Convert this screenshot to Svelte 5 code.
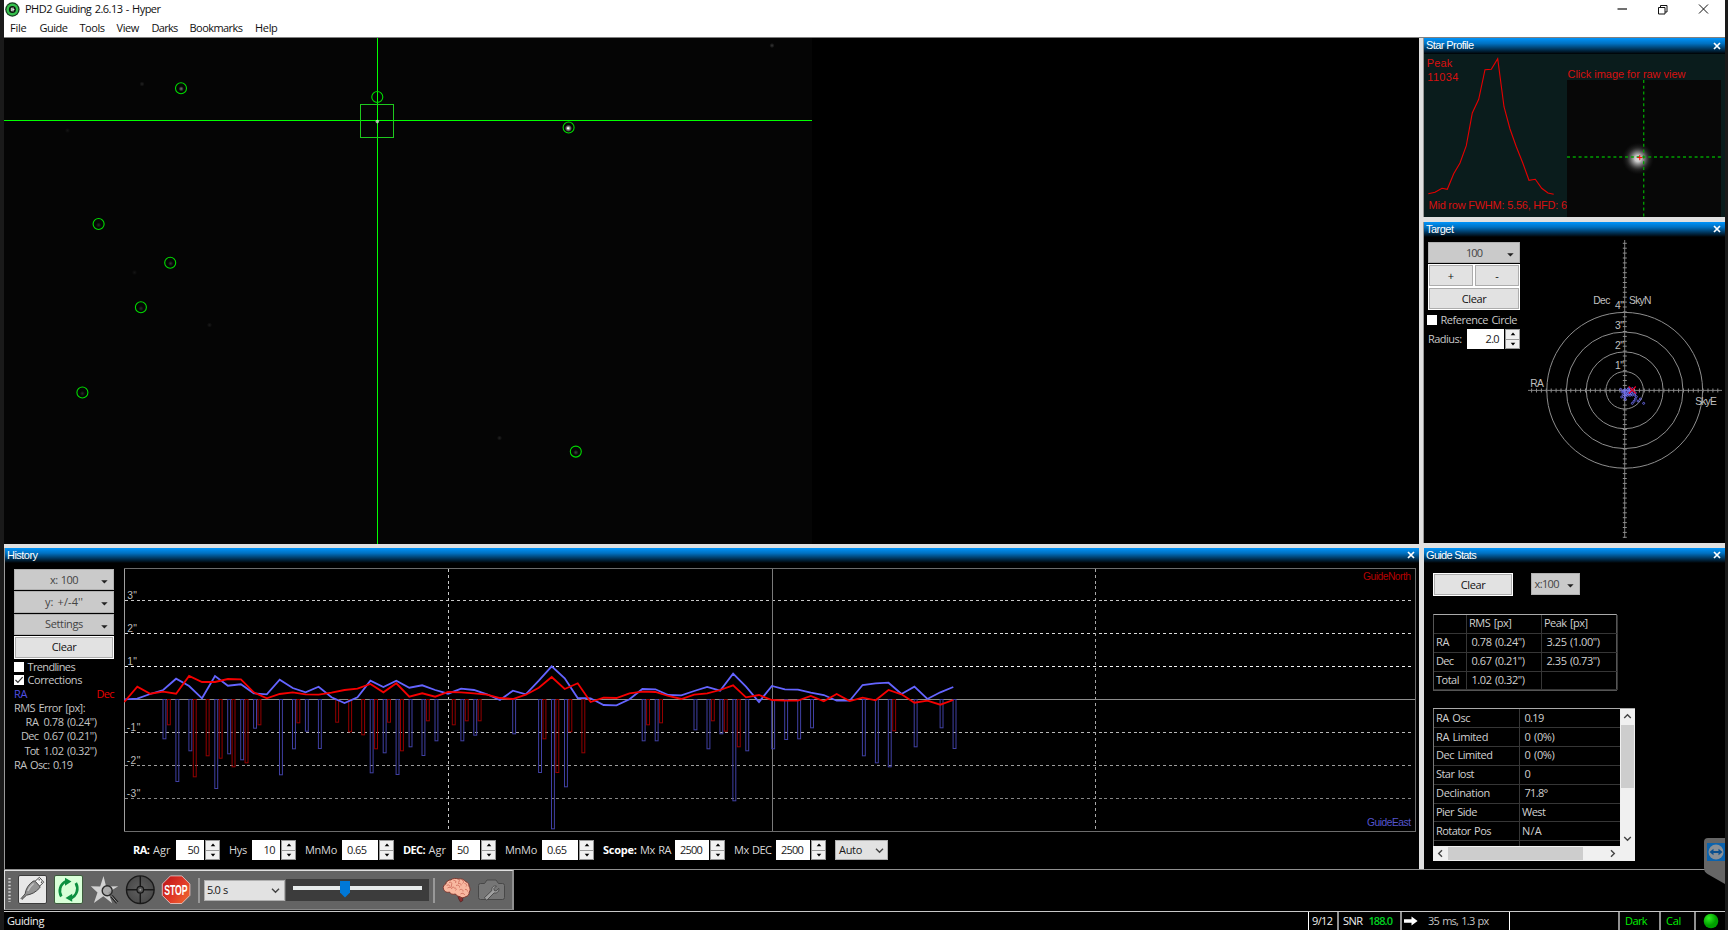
<script>
  // Sets the tracking of a label so that it takes exactly the given width.
  function fit(node, w) {
    if (!w) return;
    const n = node.textContent.length;
    const natural = node.getBoundingClientRect().width;
    node.style.letterSpacing = (w - natural) / n + 'px';
  }

  const menu = [['File', 16.5, 13], ['Guide', 28, 12], ['Tools', 25, 12], ['View', 22.5, 12.5], ['Darks', 26, 12], ['Bookmarks', 53, 12.5], ['Help', 22.5, 0]];

  const stars = [[181, 88.2], [377.3, 97], [568.6, 127.5], [98.6, 224], [170.2, 262.7], [140.9, 307.3], [82.4, 392.5], [575.8, 451.6]];
  const specks = [[142, 84, 0.12], [67.5, 130.5, 0.06], [772, 45.5, 0.2], [134.5, 272.5, 0.06], [209.5, 325, 0.09], [499.5, 438, 0.12], [181.2, 88.8, 0.45], [98.6, 225, 0.15], [170.6, 263.5, 0.2], [141, 308.5, 0.15], [82.4, 393.5, 0.15], [575.8, 452.5, 0.25]];

  const X0 = 124.3, STEP = 12.953;
  const px = (k) => X0 + k * STEP;
  const ra = [478,476,462,450,416,438,475,408,437,433,460,463,419,444,457,440,472,489,472,422,441,422,443,436,450,461,446,450,463,480,452,463,422,379,415,474,475,495,496,478,447,448,465,466,453,441,452,401,440,486,438,448,449,458,465,482,482,435,430,428,462,440,477,457,441];
  const dec = [486,440,461,455,461,408,426,426,417,418,457,475,462,457,463,464,458,450,446,432,457,430,470,460,470,456,457,460,464,474,477,464,443,411,447,430,486,473,474,460,455,456,468,477,464,460,450,436,472,465,480,482,482,468,484,462,483,473,481,450,463,488,482,494,480];
  const line = (a) => a.map((v, k) => `${px(k).toFixed(1)},${(540 + v / 3).toFixed(1)}`).join(' ');
  const raBars = [[3,598],[4,726],[5,634],[7,747],[8,643],[9,661],[10,566],[12,706],[13,628],[14,575],[15,627],[19,700],[20,640],[21,705],[22,622],[23,648],[24,604],[26,604],[27,587],[30,583],[32,699],[33,868],[34,742],[40,604],[41,604],[44,571],[45,628],[46,583],[47,784],[48,634],[50,628],[51,600],[52,598],[53,565],[57,649],[58,670],[59,682],[61,622],[63,565],[64,627]];
  const decBars = [[3,556],[5,712],[6,649],[7,656],[8,682],[9,670],[10,556],[13,550],[16,548],[17,577],[18,586],[19,628],[20,548],[21,634],[23,544],[25,556],[26,544],[27,544],[32,598],[33,699],[34,577],[35,640],[40,556],[41,550],[45,544],[46,575],[47,622],[59,574]];
  const grid = [[3,600.5,'#c8c8c8'],[2,633.5,'#dcdcdc'],[1,666.5,'#f4f4f4'],[-1,732.5,'#b8b8b8'],[-2,765.5,'#9c9c9c'],[-3,798.5,'#868686']];

  const params = [
    { w: 87, bold: 'RA:', bw: 16.5, label: 'Agr', lw: 17.5, value: '50', iw: 28, right: true },
    { w: 67, label: 'Hys', lw: 18, value: '10', iw: 28, right: true },
    { w: 89, label: 'MnMo', lw: 32, value: '0.65', iw: 36 },
    { w: 93, bold: 'DEC:', bw: 22, label: 'Agr', lw: 17.5, value: '50', iw: 28 },
    { w: 89, label: 'MnMo', lw: 32, value: '0.65', iw: 36 },
    { w: 122, bold: 'Scope:', bw: 33.5, label: 'Mx RA', lw: 31, value: '2500', iw: 34 },
    { w: 92, label: 'Mx DEC', lw: 37.5, value: '2500', iw: 34 }
  ];

  const profile = '55,581 75,577 96,565 112,568 131,521 150,489 169,437 187,339 206,298 225,209 244,208 263,176 282,320 300,387 319,440 338,488 357,541 376,538 395,565 414,579 431,583'
    .split(' ').map((p) => { const [x, y] = p.split(',').map(Number); return `${(1410 + x / 3).toFixed(1)},${(y / 3).toFixed(1)}`; }).join(' ');

  const vticks = Array.from({ length: 61 }, (_, i) => 390.3 + (i - 30) * 4.9);
  const hticks = Array.from({ length: 39 }, (_, i) => 1624.7 + (i - 19.5 + 0.5) * 4.9);
  const dots = [[632,508],[636,516],[640,512],[645,509],[650,513],[654,508],[658,514],[662,509],[646,519],[652,521],[658,521],[664,520],[640,524],[646,528],[653,526],[660,526],[667,525],[644,533],[646,538],[635,531],[670,517],[676,519],[656,505],[667,506],[679,530],[676,537],[672,544],[667,550],[684,543],[691,537],[701,550],[674,525],[649,524],[655,517],[643,517],[661,517]];

  const stats = [['RA Osc', 34, '0.19', 19, 5], ['RA Limited', 52, '0 (0%)', 30, 5], ['Dec Limited', 56.5, '0 (0%)', 30, 5], ['Star lost', 38, '0', 6, 5], ['Declination', 54, '71.8°', 23, 5], ['Pier Side', 41, 'West', 23.5, 2.5], ['Rotator Pos', 55, 'N/A', 20, 2.5]];
</script>

{#snippet t(text, w, cls = '')}<span class="t {cls}" use:fit={w}>{text}</span>{/snippet}

{#snippet caption(text, w)}
  <div class="caption">
    {@render t(text, w)}
    <svg class="x" width="8" height="8" viewBox="0 0 8 8"><path d="M1 1 7 7M7 1 1 7" stroke="#fff" stroke-width="1.7" /></svg>
  </div>
{/snippet}

{#snippet spin()}
  <span class="spin">
    <i><svg width="6" height="4" viewBox="0 0 6 4"><path d="M3 .5 5.3 3.3H.7z" /></svg></i>
    <i><svg width="6" height="4" viewBox="0 0 6 4"><path d="M3 3.5.7.7h4.6z" /></svg></i>
  </span>
{/snippet}

{#snippet arrow()}<svg class="drop" width="7" height="4" viewBox="0 0 7 4"><path d="M.2.2h6.4L3.4 3.6z" fill="#222" /></svg>{/snippet}
{#snippet chev(d)}<svg width="9" height="9" viewBox="0 0 9 9" fill="none" stroke="#444" stroke-width="1.4"><path {d} /></svg>{/snippet}

<div class="desk">
  <div class="window">
    <header>
      <div class="title">
        <svg width="15" height="15" viewBox="0 0 15 15"><circle cx="7.4" cy="7.5" r="7.2" fill="#173d20" /><circle cx="7.4" cy="7.5" r="5.9" fill="#35c04c" /><circle cx="7.4" cy="7.5" r="3.5" fill="#0a160c" /><path d="M8.9 6.2H6.3v2.6h2.6M7.2 7.5h2.2" stroke="#fff" stroke-width=".9" fill="none" /></svg>
        {@render t('PHD2 Guiding 2.6.13 - Hyper', 135.5)}
        <div class="winbtns">
          <svg width="92" height="14" viewBox="0 0 92 14" fill="none" stroke="#111" stroke-width="1"><path d="M.5 7h9.5" stroke-width="1.2" /><path d="M41.500 5.500h6.500v6.500h-6.500zM43.500 5.500v-2h6.500v6.500h-2" /><path d="m82 2.500 9 9M91 2.500l-9 9" /></svg>
        </div>
      </div>
      <nav>{#each menu as [m, w, g]}<span style="margin-right:{g}px">{@render t(m, w)}</span>{/each}</nav>
    </header>

    <main>
      <section class="left">
        <svg class="camera" width="1415" height="506" viewBox="4 38 1415 506">
          <defs><radialGradient id="speck"><stop offset="0" stop-color="#fff" /><stop offset="1" stop-color="#fff" stop-opacity="0" /></radialGradient></defs>
          <rect x="4" y="38" width="808" height="506" fill="#050505" />
          {#each specks as [x, y, o]}<circle cx={x} cy={y} r="2.6" fill="url(#speck)" opacity={o} />{/each}
          <circle cx="568.4" cy="128.3" r="3.6" fill="url(#speck)" /><circle cx="568" cy="128.2" r=".9" fill="#fff" />
          <g fill="none" stroke="#00ff00" stroke-width="1">
            <path d="M4 120.5H812M377.5 38V544" shape-rendering="crispEdges" />
            <rect x="360.5" y="104.5" width="33" height="33" stroke="#1ec81e" />
            {#each stars as [x, y]}<circle cx={x} cy={y} r="5.5" stroke="#00dc00" stroke-width="1.1" />{/each}
          </g>
          <circle cx="377.3" cy="121.6" r="1.8" fill="#d8d8d8" opacity=".75" />
        </svg>
        <div class="hbar"></div>

        <div class="panel history">
          {@render caption('History', 30.5)}
          <div class="hist-body">
            <aside>
              <div class="btn grey">{@render t('x: 100', 28)}{@render arrow()}</div>
              <div class="btn grey">{@render t("y: +/-4''", 38)}{@render arrow()}</div>
              <div class="btn grey">{@render t('Settings', 38)}{@render arrow()}</div>
              <div class="btn lite">{@render t('Clear', 24.5)}</div>
              <div class="chk first"><b></b>{@render t('Trendlines', 47.5)}</div>
              <div class="chk"><b><svg width="10" height="10" viewBox="0 0 10 10"><path d="m1.5 5 2.4 2.4L8.6 2.2" fill="none" stroke="#333" stroke-width="1.2" /></svg></b>{@render t('Corrections', 54.5)}</div>
              <div class="axes"><span class="blue">{@render t('RA', 13)}</span><span class="red">{@render t('Dec', 17.5)}</span></div>
              <div class="rms">{@render t('RMS Error [px]:', 71)}</div>
              <div class="rms two"><span>{@render t('RA', 13)}</span>{@render t("0.78 (0.24'')", 53)}</div>
              <div class="rms two"><span>{@render t('Dec', 17.5)}</span>{@render t("0.67 (0.21'')", 53)}</div>
              <div class="rms two"><span>{@render t('Tot', 14)}</span>{@render t("1.02 (0.32'')", 53)}</div>
              <div class="rms">{@render t('RA Osc: 0.19', 58.5)}</div>
            </aside>
            <svg class="chart" width="1293" height="264" viewBox="124 568 1293 264">
              <g shape-rendering="crispEdges" fill="none">
                <rect x="124.5" y="568.5" width="1291" height="263" stroke="#6c6c6c" />
                <path d="M124.5 569v262" stroke="#a0a0a0" />
                {#each grid as [v, y, c]}<path d="M125 {y}H1413" stroke={c} stroke-dasharray="3 2.83" />{/each}
                <path d="M448.5 569V830" stroke="#c8c8c8" stroke-dasharray="3 2.83" /><path d="M1095.5 569V830" stroke="#a8a8a8" stroke-dasharray="3 2.83" />
                <path d="M772.5 569V831" stroke="#7a7a7a" /><path d="M125 699.5H1415" stroke="#8c8c8c" />
              </g>
              <g fill="none" stroke="#4040a4">{#each raBars as [k, b]}<rect x={(px(k) - 0.2).toFixed(1)} y="699.5" width="2.9" height={(540 + b / 3 - 700).toFixed(1)} />{/each}</g>
              <g fill="none" stroke="#940000">{#each decBars as [k, b]}<rect x={(px(k) + 4.2).toFixed(1)} y="699.5" width="2.9" height={(540 + b / 3 - 700).toFixed(1)} />{/each}</g>
              <polyline points={line(ra)} fill="none" stroke="#6464ff" stroke-width="1.8" />
              <polyline points={line(dec)} fill="none" stroke="#f50000" stroke-width="1.8" />
              {#each grid as [v, y]}<text class="arial small" x={v > 0 ? 127.3 : 126.8} y={y - 1.5} textLength={v > 0 ? 9.7 : 13.5} fill="#bcbcbc">{v}"</text>{/each}
              <text class="arial small" x="1363" y="580.3" textLength="48" fill="#b40000">GuideNorth</text>
              <text class="arial small" x="1367" y="826.3" textLength="44" fill="#5454cc">GuideEast</text>
            </svg>
          </div>
          <div class="params">
            {#each params as p}
              <div class="param" style="width:{p.w}px">
                <span class="lab">{#if p.bold}<strong>{@render t(p.bold, p.bw)}</strong>{/if}{@render t(p.label, p.lw)}</span>
                <span class="inp" class:right={p.right} style="width:{p.iw}px">{@render t(p.value, p.value.length === 2 ? 11.5 : p.value === '0.65' ? 19.5 : 22)}</span>
                {@render spin()}
              </div>
            {/each}
            <div class="auto">{@render t('Auto', 23)}{@render chev('M1 2.8 4.5 6.3 8 2.8')}</div>
          </div>
        </div>
      </section>

      <section class="rightcol">
        <div class="panel star">
          {@render caption('Star Profile', 47.5)}
          <svg width="301" height="163" viewBox="1424 54 301 163">
            <defs><radialGradient id="psf"><stop offset="0" stop-color="#e0e0e0" /><stop offset=".2" stop-color="#c8c8c8" /><stop offset=".45" stop-color="#808080" stop-opacity=".8" /><stop offset=".7" stop-color="#484848" stop-opacity=".4" /><stop offset="1" stop-color="#202020" stop-opacity="0" /></radialGradient></defs>
            <rect x="1424" y="54" width="301" height="163" fill="#0a1c1c" />
            <polyline points={profile} fill="none" stroke="#e60000" stroke-width="1.1" />
            <g class="arial" fill="#d81010">
              <text x="1426.7" y="67" textLength="25.5">Peak</text><text x="1427.3" y="80.7" textLength="31">11034</text>
              <text x="1567.5" y="77.8" textLength="118">Click image for raw view</text>
              <text x="1428.5" y="209.3" textLength="138.5">Mid row FWHM: 5.56, HFD: 6</text>
            </g>
            <rect x="1567" y="80" width="154" height="137" fill="#070707" />
            <circle cx="1638" cy="158.6" r="16" fill="url(#psf)" />
            <path d="M1567 157H1721M1643.7 80V217" stroke="#00a000" stroke-width="1.3" stroke-dasharray="3 2.8" />
            <path d="M1637.3 157.6h5M1639.8 155v5.2" stroke="#f00" />
          </svg>
        </div>
        <div class="hbar five"></div>
        <div class="panel target">
          {@render caption('Target', 27.5)}
          <div class="target-body">
            <div class="tctl">
              <div class="btn grey">{@render t('100', 16)}{@render arrow()}</div>
              <div class="pm"><div class="btn lite">+</div><div class="btn lite">-</div></div>
              <div class="btn lite">{@render t('Clear', 24.5)}</div>
              <div class="chk"><b></b>{@render t('Reference Circle', 76.5)}</div>
              <div class="radius">{@render t('Radius:', 33.5)}<span class="inp">{@render t('2.0', 13.5)}</span>{@render spin()}</div>
            </div>
            <svg width="199" height="306" viewBox="1526 237 199 306">
              <g fill="none" stroke="#8e8e8e">
                {#each [18.7, 38.4, 58.3, 77.9] as r}<circle cx="1624.7" cy="390.3" r={r} />{/each}
                <path d="M1624.7 240V538M1528 390.4H1722" stroke="#808080" />
                {#each vticks as y}<path d="M1622.8 {y}h4" />{/each}
                {#each hticks as x}<path d="M{x} 388.5v4" />{/each}
              </g>
              <g class="arial small" fill="#c0c0c0">
                <text x="1593.3" y="303.5" textLength="17">Dec</text><text x="1629" y="303.5" textLength="22.5">SkyN</text>
                <text x="1530.3" y="386.8" textLength="13.5">RA</text><text x="1695.3" y="404.8" textLength="21.5">SkyE</text>
                {#each [[4, 309.2], [3, 329], [2, 349], [1, 368.8]] as [n, y]}<text x="1615" y={y} textLength="9">{n}"</text>{/each}
              </g>
              <g fill="none" stroke="#7474ff" stroke-width=".8">{#each dots as [x, y]}<circle cx={1410 + x / 3} cy={220 + y / 3} r="1" />{/each}</g>
              <path d="m1628.8 386.500 7 7m0-7-7 7" stroke="#e8002a" stroke-width="1.1" />
            </svg>
          </div>
        </div>
        <div class="hbar five"></div>
        <div class="panel gstats">
          {@render caption('Guide Stats', 50)}
          <div class="gtop"><div class="btn lite">{@render t('Clear', 24.5)}</div><div class="btn grey">{@render t('x:100', 24.5)}{@render arrow()}</div></div>
          <div class="tbl rmst">
            <span></span><span>{@render t('RMS [px]', 42.5)}</span><span>{@render t('Peak [px]', 43.5)}</span>
            <span>{@render t('RA', 13)}</span><span class="in">{@render t("0.78 (0.24'')", 53)}</span><span class="in">{@render t("3.25 (1.00'')", 53)}</span>
            <span>{@render t('Dec', 17.5)}</span><span class="in">{@render t("0.67 (0.21'')", 53)}</span><span class="in">{@render t("2.35 (0.73'')", 53)}</span>
            <span>{@render t('Total', 23)}</span><span class="in">{@render t("1.02 (0.32'')", 53)}</span><span></span>
          </div>
          <div class="list">
            <div class="rows">
              {#each stats as [a, aw, b, bw, pad]}<div class="row"><span>{@render t(a, aw)}</span><span style="padding-left:{pad}px">{@render t(b, bw)}</span></div>{/each}
              <div class="row stub"><span></span><span></span></div>
            </div>
            <div class="vs">{@render chev('M1.2 6 4.5 2.7 7.8 6')}<i></i>{@render chev('M1.2 3 4.5 6.3 7.8 3')}</div>
            <div class="hs">{@render chev('M6 1.2 2.7 4.5 6 7.8')}<i></i>{@render chev('M3 1.2 6.3 4.5 3 7.8')}</div>
            <div class="corner"></div>
          </div>
          <svg class="badge" width="21" height="46" viewBox="0 0 21 46"><path d="M21 0H4Q0 0 0 4v25.500Q0 34 3.500 36L21 46z" fill="#666" /><rect x="3" y="5" width="18" height="18" fill="#0b63ae" /><circle cx="12" cy="14" r="7.500" fill="#8a9096" /><path d="m5.500 14 4-3.300v2.300h5v-2.300l4 3.300-4 3.300v-2.300h-5v2.300z" fill="#0a4f8e" /></svg>
        </div>
      </section>
    </main>

    <div class="dock">
      <div class="toolbar">
        <svg width="188" height="34" viewBox="4 873 188 34">
          <defs>
            <linearGradient id="stop" x1="0" x2="1" y1=".2" y2="1"><stop offset="0" stop-color="#c01818" /><stop offset=".5" stop-color="#e03a28" /><stop offset="1" stop-color="#f07030" /></linearGradient>
            <radialGradient id="scope"><stop offset="0" stop-color="#606060" /><stop offset="1" stop-color="#4a4a4a" /></radialGradient>
          </defs>
          <path d="M9.500 878v24" stroke="#d0d0d0" stroke-width="2.400" stroke-dasharray="1.500 1.830" />
          <rect x="18.500" y="875.500" width="28" height="28" rx="1.500" fill="#e8e8e8" stroke="#3c3c3c" />
          <path d="m34.800 881.500 4.600-4.200 4.300 4.900-4.500 4.300z" fill="#f4f4f4" stroke="#333" stroke-width=".9" /><path d="m38.700 880.200.9-.8M41 882.600l.9-.8" stroke="#333" stroke-width="1.200" />
          <path d="M33 881.300q1.200-1 2.400.2l4.300 4.600q.8 1.200-.4 2.200-2.600 2.700-5.800 4.600-3.600 1.800-7 2.300l-4.500 4.200-.9-.9 4-4.600q.5-3.800 2.600-7.200 2.200-3.300 5.300-5.400z" fill="#949494" stroke="#3c3c3c" stroke-width=".9" /><path d="M27.800 891q1.800-4.300 5.800-7.500" fill="none" stroke="#c4c4c4" stroke-width="1.500" />
          <rect x="54.500" y="875.500" width="28" height="28" rx="1.500" fill="#d8ffd8" stroke="#3c5c3c" />
          <g fill="none" stroke="#0c9040" stroke-width="2.700"><path d="M61.300 896.500c-3-5.500-1.500-12.500 5.200-15.500" /><path d="M75.800 883c3 5.500 1.500 12.500-5.200 15.500" /></g>
          <path d="m65 877.800 6.500 3.700-6.500 4.300zM72.200 893.700l-6.700 4.300 6.700 3.800z" fill="#0c9040" />
          <path d="m103.500 876 2.600 10.500 12.100-.3-9.900 6.300 3.900 10.700-8.900-7-9.400 6.900 3.600-10.700-6.700-6.200 9.400.3z" fill="#d2d2d2" />
          <path d="m111.500 896 5.800 6.800" stroke="#222" stroke-width="3" /><path d="m111.500 896 5.800 6.800" stroke="#999" stroke-width="1" /><circle cx="107.200" cy="890.700" r="5" fill="#a0a0a0" fill-opacity=".8" stroke="#2a2a2a" stroke-width="1.400" />
          <circle cx="140.300" cy="889.700" r="13.800" fill="url(#scope)" stroke="#1a1a1a" stroke-width="1.400" /><path d="M126.500 889.700h27.600M140.300 876v27.500" stroke="#181818" stroke-width="1.400" /><circle cx="140.300" cy="889.700" r="3.300" fill="#565656" stroke="#151515" stroke-width="1.200" /><circle cx="140.300" cy="889.700" r="1" fill="#999" />
          <path d="M170.400 875.900h11.400l8.100 8.100v11.400l-8.100 8.100h-11.400l-8.100-8.100V884z" fill="url(#stop)" stroke="#f0d0d0" stroke-width=".8" />
          <text transform="translate(164.200 894.700) scale(.62 1)" font-family="Liberation Sans" font-weight="bold" font-size="14" fill="#fff">STOP</text>
        </svg>
        <i class="sep"></i>
        <div class="expo">{@render t('5.0 s', 20.5)}{@render chev('M1 2.8 4.5 6.3 8 2.8')}</div>
        <div class="slider"><svg width="143" height="22" viewBox="0 0 143 22"><rect x="7" y="7" width="129" height="4" fill="#e8ecec" /><path d="M54 2h10v11.500L59 18.500l-5-5z" fill="#0078d7" /></svg></div>
        <i class="sep two"></i>
        <svg class="tail" width="66" height="34" viewBox="440 873 66 34">
          <path d="M458 895.500l4.500 1 .3 4-2.300 1.500-2-3.500z" fill="#8c3030" stroke="#501c1c" stroke-width=".7" />
          <path d="M443.500 889c-1-2 .8-4.500 2.300-5 .2-2.500 3-4.300 5-4 2-1.900 5.500-1.900 7.500-1 3-.6 6 .5 7.200 2.500 2.500.8 3.700 3 3.500 4.700 1.500 2 1.300 4.500.2 5.800.2 2.500-1.500 4.500-3.700 4.700-1.500 1.500-4.500 1.200-5.500 0-2-.4-4-1.200-4.500-2.700-2.500.8-5.500 0-6-2-2.500 1-5.300-.5-6-3z" fill="#f8b8a0" stroke="#7a3028" stroke-width=".9" />
          <path d="M446.500 886c1.500-2 3-1 3.500.5m-1-4c2-1 3.500.5 2.500 2.500s1 3 2.500 2m-.5-6.500c2-.5 3 1 2 2.500m3-4c1.500 1 1 3-.5 3.500m4-2.500c2 .5 2 2.500.5 3.500m-4.500 0c2-.5 3.500.5 3 2m3.500-2c2 0 3 2 1.500 3m-10-1c2-1 4 0 3.500 2m-12 .5c2-1.500 4-.5 4.500 1m2-1c2-.5 3 1.500 1.500 2.500m4-.5c2-1.500 4 0 3.500 1.500m2-2c1.500-.5 2.500.5 2.500 2m-7 2.500c2-1.500 4-.5 4 1" fill="none" stroke="#cc6858" stroke-width=".8" />
          <path d="M480.500 883.500h4l2.500-3.500h9l2.500 3.500h4q2 0 2 2v12q0 2-2 2h-22q-2 0-2-2v-12q0-2 2-2z" fill="#767676" stroke="#484848" />
          <path d="m484.300 897.800 7.600-7.300c-.7-2.800 1.800-5.300 4.500-4.500l-2.600 2.700.5 1.900 1.900.4 2.500-2.600c.8 2.900-1.700 5.300-4.600 4.500l-7.300 7.300z" fill="#a0a0a0" stroke="#3c3c3c" stroke-width=".8" />
        </svg>
      </div>
    </div>

    <footer>
      <span class="s0">{@render t('Guiding', 37)}</span>
      <span class="s1">{@render t('9/12', 20.5)}</span>
      <span class="s2">{@render t('SNR', 19.5)}<em>{@render t('188.0', 23.5)}</em></span>
      <span class="s3"><svg width="14" height="10" viewBox="0 0 14 10"><path d="M0 3.200h7.500V.5L13.600 5 7.500 9.500V6.800H0z" fill="#fff" /></svg>{@render t('35 ms, 1.3 px', 60.5)}</span>
      <span class="s4"></span>
      <span class="s5">{@render t('Dark', 22)}</span>
      <span class="s6">{@render t('Cal', 15)}</span>
      <span class="s7"><svg width="16" height="16" viewBox="0 0 16 16"><defs><radialGradient id="led" cx=".35" cy=".3"><stop offset="0" stop-color="#30f020" /><stop offset="1" stop-color="#00a000" /></radialGradient></defs><circle cx="8" cy="8" r="7.300" fill="url(#led)" /></svg></span>
    </footer>
  </div>
</div>

<style>
  :global(body) { margin: 0; background: #1a1a1a; overflow: hidden; }
  .desk { width: 1728px; height: 930px; padding: 0 3px 0 4px; box-sizing: border-box; background: #1a1a1a; font: 11px/14px 'Open Sans', sans-serif; word-spacing: 1px; color: #e0e0e0; overflow: hidden; }
  .desk :global(*) { box-sizing: border-box; }
  svg { display: block; flex: none; }
  .t { display: inline-block; white-space: pre; flex: none; }
  .arial { font: 11px 'Liberation Sans', sans-serif; word-spacing: 0; }
  .small { font-size: 10.300px; }
  .window { width: 1721px; height: 930px; background: #000; display: flex; flex-direction: column; }
  header { height: 38px; background: #fff; color: #101010; border-bottom: 1px solid #808080; flex: none; }
  .title { display: flex; height: 18px; align-items: center; padding-left: 1px; gap: 5px; }
  .winbtns { margin-left: auto; padding-right: 16px; }
  nav { display: flex; padding: 3px 0 0 6px; }
  main { display: grid; grid-template-columns: 1415px 4px 302px; height: 832px; background: #e0e0e0; border-bottom: 1px solid #909090; flex: none; }
  .left { display: flex; flex-direction: column; }
  .rightcol { grid-column: 3; display: flex; flex-direction: column; }
  .camera { background: #000; }
  .hbar { height: 4px; background: #e0e0e0; flex: none; }
  .five { height: 5px; }
  .panel { background: #000; border-left: 1px solid #999; overflow: hidden; }
  .caption { height: 15px; display: flex; align-items: center; justify-content: space-between; padding: 0 4px 1px 2px; color: #fff; font: 11px/12px 'Liberation Sans', sans-serif; word-spacing: 0; background: linear-gradient(#0094fa, #0070c0 35%, #001626 88%, #000); }
  .caption .t { position: relative; top: -.5px; }
  .history { height: 321px; }
  .hist-body { display: flex; padding: 5px 0 0 9px; gap: 10px; }
  aside { width: 100px; padding-top: 1px; }
  .btn { display: flex; align-items: center; justify-content: center; position: relative; }
  .grey { background: #cacaca; border: 1px solid #b0b0b0; color: #444; height: 21px; margin-bottom: 1px; }
  aside .grey { height: 21.300px; }
  .grey .drop { position: absolute; right: 5px; top: 10px; }
  .lite { background: #e2e2e2; border: 1px solid #fff; outline: 1px solid #adadad; outline-offset: -2px; color: #111; height: 23px; }
  .chk { display: flex; align-items: center; gap: 3.500px; height: 13.500px; color: #c8c8c8; }
  .chk b { width: 10px; height: 10px; background: #fff; }
  .first { margin-top: 1px; }
  .axes { display: flex; justify-content: space-between; height: 14px; }
  .blue { color: #5050e4; }
  .red { color: #e80000; }
  .rms { height: 14.300px; color: #c4c4c4; }
  .two { display: flex; gap: 5px; }
  .two > span:first-child { width: 24.500px; text-align: right; }
  .params { display: flex; gap: 9px; height: 20px; margin: 8px 0 0 128px; }
  .param { display: flex; align-items: center; height: 20px; }
  .lab { flex: 1; display: flex; gap: 3.500px; color: #d8d8d8; }
  strong { color: #fff; }
  .inp { background: #fff; color: #181818; height: 20px; display: flex; align-items: center; padding: 0 5px 1px; margin-right: 1px; }
  .right { justify-content: flex-end; }
  .spin { width: 15px; height: 20px; display: grid; gap: 1px; background: #999; padding: 1px; }
  .spin i { background: #f0f0f0; display: grid; place-items: center; }
  .auto { width: 53px; height: 20px; background: #e2e2e2; border: 1px solid #b0b0b0; color: #181818; display: flex; align-items: center; justify-content: space-between; padding: 0 3px; }
  .star { height: 179px; }
  .star .caption { height: 16px; }
  .target { height: 321px; }
  .target-body { display: flex; justify-content: space-between; }
  .tctl { width: 97px; padding: 5px 0 0 4px; }
  .pm { display: grid; grid-template-columns: 46px 46px; width: 92px; }
  .tctl .btn { width: 92px; }
  .tctl .pm .btn { width: 46px; }
  .tctl .chk { margin: 3px 0 0 -1px; width: 96px; }
  .radius { display: flex; align-items: center; margin-top: 2.500px; width: 92px; height: 20px; color: #c8c8c8; }
  .radius .inp { width: 37px; margin-left: auto; justify-content: flex-end; }
  .gstats { height: 321px; border-left: 1px solid #e0e0e0; position: relative; }
  .gtop { display: flex; gap: 17.500px; padding: 10px 0 0 9px; }
  .gtop .lite { width: 80px; }
  .gtop .grey { width: 49px; height: 22px; justify-content: flex-start; padding-left: 3px; }
  .tbl { display: grid; margin: 18px 0 0 9px; color: #d0d0d0; }
  .rmst { grid-template-columns: 33px 75px 76px; grid-auto-rows: 18.850px; width: 184px; border: 1px solid #555; border-top-color: #aaa; }
  .rmst > span { border-right: 1px solid #363636; border-bottom: 1px solid #363636; padding: 1.300px 0 0 2px; }
  .rmst > .in { padding-left: 4.500px; }
  .list { display: grid; grid-template: 137px 15px / 187px 15px; width: 202px; margin: 17px 0 0 9px; border-top: 1px solid #aaa; background: #f0f0f0; }
  .rows { background: #000; border-left: 1px solid #777; overflow: hidden; color: #d0d0d0; }
  .row { display: grid; grid-template-columns: 85.500px 1fr; height: 18.850px; }
  .row > span { border-right: 1px solid #363636; border-bottom: 1px solid #363636; padding: 1.300px 0 0 2px; }
  .row > span + span { border-right: 0; }
  .vs { display: flex; flex-direction: column; align-items: center; justify-content: space-between; padding: 3px 1px; }
  .vs i { width: 13px; height: 63px; background: #cdcdcd; margin: 2px 0 44px; }
  .hs { display: flex; align-items: center; padding: 0 3px; }
  .hs i { width: 135px; height: 13px; background: #cdcdcd; margin: 0 auto 0 3px; }
  .badge { position: absolute; right: 0; top: 290px; }
  .dock { height: 41px; flex: none; }
  .gstats { overflow: visible; }
  .toolbar { width: 510px; height: 40px; background: #646464; border: 1px solid #e0e0e0; border-right: 2px solid #909090; border-bottom-color: #888; display: flex; align-items: center; }
  .toolbar > svg:first-child { margin-left: -1px; }
  .sep { width: 2px; height: 25px; background: #999; margin: 0 4px 0 6px; }
  .expo { width: 81px; height: 21px; background: #e2e2e2; border: 1px solid #b0b0b0; color: #181818; display: flex; align-items: center; justify-content: space-between; padding: 0 4px 0 2px; margin-right: 1px; }
  .slider { width: 143px; height: 22px; background: #3c3c3c; }
  .two.sep { margin: 0 5px 0 4px; }
  footer { height: 19px; border-top: 1px solid #c8c8c8; display: flex; line-height: 18px; flex: none; color: #f0f0f0; }
  footer > span { height: 18px; display: flex; align-items: center; border-left: 2px solid #909090; padding-left: 2px; flex: none; }
  .s0 { width: 1304px; border: 0; padding-left: 3px; }
  .s1 { width: 29px; border-left: 1px solid #fff; padding-left: 3px; }
  .s2 { width: 63px; padding-left: 4px; gap: 6px; }
  em { font-style: normal; font-weight: 600; color: #00d020; }
  .s3 { width: 109px; gap: 10px; color: #c4c4c4; }
  .s4 { width: 109px; border-left: 1px solid #fff; }
  .s5 { width: 41px; padding-left: 5px; color: #00f000; }
  .s6 { width: 35px; padding-left: 5px; color: #00f000; }
  .s7 { padding-left: 7px; }
</style>
